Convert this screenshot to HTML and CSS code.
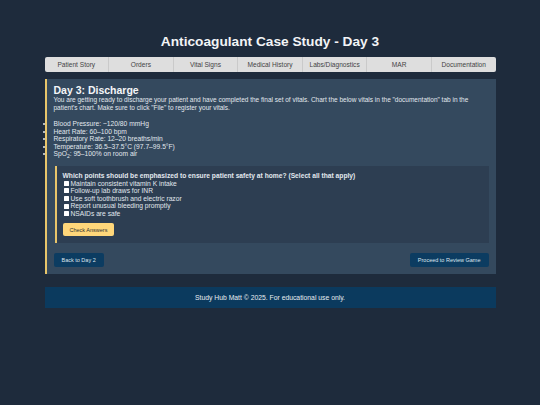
FILE: index.html
```html
<!DOCTYPE html>
<html>
<head>
    <title>Anticoagulant Case Study - Day 3</title>
    <link rel="stylesheet" href="styles.css">
</head>
<body>
    <div class="container">
        <h1>Anticoagulant Case Study - Day 3</h1>

        <nav class="tabs">
            <a href="#">Patient Story</a>
            <a href="#">Orders</a>
            <a href="#">Vital Signs</a>
            <a href="#">Medical History</a>
            <a href="#">Labs/Diagnostics</a>
            <a href="#">MAR</a>
            <a href="#">Documentation</a>
        </nav>

        <div class="section">
            <h2>Day 3: Discharge</h2>
            <p>You are getting ready to discharge your patient and have completed the final set of vitals. Chart the below vitals in the "documentation" tab in the patient's chart. Make sure to click "File" to register your vitals.</p>

            <ul class="vitals">
                <li>Blood Pressure: ~120/80 mmHg</li>
                <li>Heart Rate: 60–100 bpm</li>
                <li>Respiratory Rate: 12–20 breaths/min</li>
                <li>Temperature: 36.5–37.5°C (97.7–99.5°F)</li>
                <li>SpO<sub>2</sub>: 95–100% on room air</li>
            </ul>

            <div class="quiz">
                <p class="question">Which points should be emphasized to ensure patient safety at home? (Select all that apply)</p>
                <label><input type="checkbox"> Maintain consistent vitamin K intake</label>
                <label><input type="checkbox"> Follow-up lab draws for INR</label>
                <label><input type="checkbox"> Use soft toothbrush and electric razor</label>
                <label><input type="checkbox"> Report unusual bleeding promptly</label>
                <label><input type="checkbox"> NSAIDs are safe</label>
                <button class="check">Check Answers</button>
            </div>

            <div class="nav-buttons">
                <button class="nav-btn">Back to Day 2</button>
                <button class="nav-btn">Proceed to Review Game</button>
            </div>
        </div>

        <footer>Study Hub Matt © 2025. For educational use only.</footer>
    </div>
</body>
</html>
```

FILE: styles.css
```css
body { margin: 0; background: #1e2b3c; font-family: "Liberation Sans", Arial, sans-serif; color: #e2e8ee; }
.container { width: 451px; margin: 0 auto; padding-top: 33px; }
h1 { font-size: 13.7px; line-height: 17px; text-align: center; margin: 0 0 7px; color: #f2f4f6; }

.tabs { display: flex; background: #dedede; border-radius: 2px; height: 15px; }
.tabs a { flex: 1; text-align: center; font-size: 6.6px; line-height: 15px; color: #444; text-decoration: none; border-right: 1px solid #cacaca; }
.tabs a:last-child { border-right: none; }

.section { background: #34495e; border-left: 2px solid #e8c56a; margin-top: 7px; padding: 5px 7px 7px 7px; }
.section h2 { font-size: 10.5px; line-height: 12px; margin: 0; color: #f4f6f8; }
.section p { font-size: 6.5px; line-height: 8px; margin: 0; }

.vitals { list-style: disc; padding-left: 0; margin: 8px 0 8.5px; font-size: 6.7px; line-height: 7.5px; }
.vitals sub { font-size: 5px; line-height: 0; }

.quiz { background: #2d3e52; border-left: 2px solid #e8c56a; margin-left: 1px; padding: 6px 6px 7px 6px; }
.quiz .question { font-weight: bold; font-size: 6.7px; line-height: 7.6px; }
.quiz label { display: flex; align-items: center; gap: 2px; font-size: 6.7px; line-height: 7.6px; }
.quiz input { width: 5px; height: 5px; margin: 0 0 0 1px; appearance: none; background: #fff; border-radius: 0.5px; }
.check { background: #ffd77a; color: #333; border: none; border-radius: 2px; font-size: 5.5px; line-height: 6px; padding: 3.5px 7px; margin-top: 4px; font-family: inherit; }

.nav-buttons { display: flex; justify-content: space-between; margin-top: 10px; }
.nav-btn { background: #0c3c61; color: #dde6ee; border: none; border-radius: 2px; font-size: 5.5px; line-height: 6px; padding: 4.2px 8px; font-family: inherit; }

footer { background: #0b3a5e; margin-top: 13px; height: 21px; line-height: 21px; text-align: center; font-size: 6.8px; color: #e8ecf0; }
```
